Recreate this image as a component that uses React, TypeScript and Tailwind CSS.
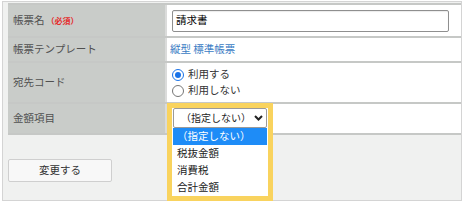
import React from "react";

const font = { fontFamily: '"Noto Sans CJK JP", "Noto Sans", sans-serif' };

function Radio({ checked, label }: { checked: boolean; label: string }) {
  return (
    <div className="flex items-center h-[16px]">
      {checked ? (
        <span className="w-[12px] h-[12px] rounded-full border-[1.5px] border-[#1a73e8] bg-white flex items-center justify-center">
          <span className="w-[6px] h-[6px] rounded-full bg-[#1a73e8]" />
        </span>
      ) : (
        <span className="w-[12px] h-[12px] rounded-full border border-[#767676] bg-white" />
      )}
      <span className="ml-[4px] text-[10.5px] text-[#333] leading-none">{label}</span>
    </div>
  );
}

function Row({
  label,
  h,
  children,
  required,
}: {
  label: string;
  h: string;
  children?: React.ReactNode;
  required?: boolean;
}) {
  return (
    <div className={`flex border-b-2 border-[#c6c8c6] ${h}`}>
      <div className="w-[159px] shrink-0 bg-[#c9ccc9] border-r-2 border-[#dadbda] flex items-center pl-[5px]">
        <span className="text-[10.5px] text-[#505050] leading-none">{label}</span>
        {required && (
          <span className="ml-[2px] text-[8px] font-bold text-[#e52b2b] leading-none">（必須）</span>
        )}
      </div>
      <div className="flex-1 bg-white relative flex items-center">{children}</div>
    </div>
  );
}

export default function App() {
  return (
    <div className="w-[463px] h-[202px] bg-white pl-[2px] pt-[1px]" style={font}>
      <div className="w-[460px] h-[200px] border border-[#d4d4d4] bg-[#f0f1f0] pl-[5px] pt-[1px]">
        <div className="border-t-2 border-[#c6c8c6]">
          <Row label="帳票名" h="h-[33px]" required>
            <div className="ml-[5px] w-[277px] h-[22px] border border-[#8f8f8f] rounded-[2px] bg-white flex items-center pl-[3px] shadow-[inset_0_1px_1px_rgba(0,0,0,0.08)]">
              <span className="text-[10.5px] text-black leading-none">請求書</span>
            </div>
          </Row>
          <Row label="帳票テンプレート" h="h-[25px]">
            <span className="ml-[3px] text-[10.5px] text-[#3b7cc4] leading-none">縦型 標準帳票</span>
          </Row>
          <Row label="宛先コード" h="h-[41px]">
            <div className="ml-[5px] flex flex-col">
              <Radio checked label="利用する" />
              <Radio checked={false} label="利用しない" />
            </div>
          </Row>
          <Row label="金額項目" h="h-[31px]">
            <div className="absolute left-0 -top-[1px] w-[106px] h-[98px] border-[5px] border-[#f9d35e] pl-[1px] bg-white z-10 flex flex-col">
              <div className="w-[94px] h-[20px] border border-[#9a9a9a] rounded-[2px] bg-white flex items-center pl-[7px] pr-[3px]">
                <span className="text-[10px] text-[#222] leading-none">（指定しない）</span>
                <svg className="ml-auto" width="9" height="6" viewBox="0 0 9 6">
                  <polyline points="1,1 4.5,4.5 8,1" fill="none" stroke="#222" strokeWidth="2" />
                </svg>
              </div>
              <div className="w-[94px] flex flex-col bg-white">
                <div className="h-[17px] bg-[#1e8cf7] flex items-center pl-[4px]">
                  <span className="text-[10.5px] text-white leading-none">（指定しない）</span>
                </div>
                <div className="h-[17px] flex items-center pl-[4px]">
                  <span className="text-[10.5px] text-[#222] leading-none">税抜金額</span>
                </div>
                <div className="h-[17px] flex items-center pl-[4px]">
                  <span className="text-[10.5px] text-[#222] leading-none">消費税</span>
                </div>
                <div className="h-[17px] flex items-center pl-[4px]">
                  <span className="text-[10.5px] text-[#222] leading-none">合計金額</span>
                </div>
              </div>
            </div>
          </Row>
        </div>
        <div className="mt-[24px] w-[104px] h-[23px] border border-[#cfcfcf] rounded-[2px] bg-[#f8f8f8] flex items-center justify-center">
          <span className="text-[10.5px] text-[#333] leading-none">変更する</span>
        </div>
      </div>
    </div>
  );
}
